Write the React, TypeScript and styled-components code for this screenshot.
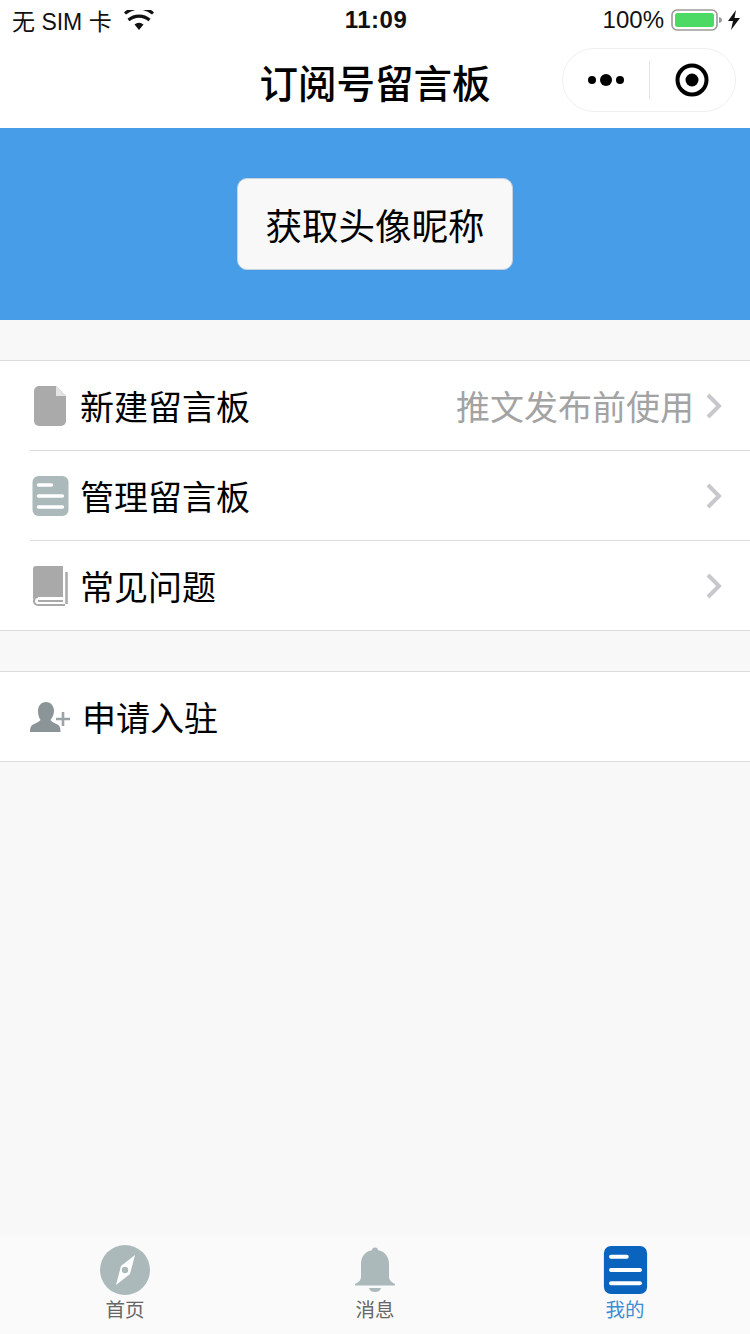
import React from "react";
import styled, { createGlobalStyle } from "styled-components";

const GlobalStyle = createGlobalStyle`
  html, body {
    margin: 0;
    padding: 0;
    background: #f8f8f8;
    font-family: "Liberation Sans", "Noto Sans CJK SC", sans-serif;
  }
  * { box-sizing: border-box; }
`;

const Page = styled.div`
  width: 750px;
  height: 1334px;
  display: flex;
  flex-direction: column;
  background: #f8f8f8;
  overflow: hidden;
`;

const StatusBar = styled.div`
  height: 40px;
  background: #fff;
  display: grid;
  grid-template-columns: 1fr auto 1fr;
  align-items: center;
  padding: 0 10px 0 12px;
  color: #111;
`;
const StatusLeft = styled.div`
  display: flex;
  align-items: center;
  gap: 12px;
  font-size: 23px;
  white-space: nowrap;
`;
const StatusTime = styled.div`
  font-size: 24px;
  font-weight: 700;
  letter-spacing: 0.5px;
`;
const StatusRight = styled.div`
  display: flex;
  align-items: center;
  justify-content: flex-end;
  gap: 7px;
  font-size: 24px;
`;

const NavBar = styled.div`
  height: 88px;
  background: #fff;
  display: flex;
  align-items: center;
  justify-content: center;
  position: relative;
`;
const NavTitle = styled.div`
  font-size: 38.5px;
  font-weight: 500;
  color: #000;
  margin-top: -7px;
`;
const Capsule = styled.div`
  position: absolute;
  right: 14px;
  top: 8px;
  width: 174px;
  height: 64px;
  border: 1px solid #f0f0f0;
  border-radius: 32px;
  display: flex;
  align-items: center;
  background: #fff;
`;
const CapsuleCell = styled.div`
  flex: 1;
  height: 38px;
  display: flex;
  align-items: center;
  justify-content: center;
  & + & {
    border-left: 1px solid #e2e2e2;
  }
`;

const Banner = styled.div`
  height: 192px;
  background: #489de8;
  display: flex;
  align-items: flex-start;
  justify-content: center;
  padding-top: 50px;
`;
const ProfileButton = styled.button`
  width: 276px;
  height: 92px;
  background: #f8f8f8;
  border: 1px solid #c9d3dc;
  border-radius: 10px;
  font-family: inherit;
  font-size: 36.5px;
  color: #000;
  padding: 0;
`;

const Group = styled.div`
  margin-top: 40px;
  background: #fff;
  border-top: 1px solid #dcdcdc;
  border-bottom: 1px solid #dcdcdc;
`;
const Row = styled.div<{ $divided?: boolean }>`
  height: ${(p) => (p.$divided ? 90 : 89)}px;
  display: flex;
  align-items: center;
  padding-right: 28px;
  margin-left: 30px;
  border-bottom: ${(p) => (p.$divided ? "1px solid #dcdcdc" : "none")};
`;
const RowIcon = styled.div`
  width: 40px;
  height: 44px;
  margin-right: 10px;
  display: flex;
  align-items: center;
  justify-content: center;
`;
const RowLabel = styled.div<{ $indent?: number }>`
  flex: 1;
  font-size: 34px;
  color: #000;
  margin-left: ${(p) => p.$indent ?? 0}px;
`;
const RowHint = styled.div`
  font-size: 34px;
  color: #a3a3a3;
  margin-right: 12px;
`;

const TabBar = styled.div`
  margin-top: auto;
  height: 98px;
  background: #fafafa;
  display: grid;
  grid-template-columns: repeat(3, 1fr);
`;
const Tab = styled.div`
  display: flex;
  flex-direction: column;
  align-items: center;
  padding-top: 8px;
`;
const TabIcon = styled.div`
  height: 52px;
  display: flex;
  align-items: center;
  justify-content: center;
`;
const TabLabel = styled.div<{ $active?: boolean }>`
  font-size: 19.5px;
  line-height: 28px;
  margin-top: 0;
  color: ${(p) => (p.$active ? "#3b8ed4" : "#666")};
`;

const Chevron = () => (
  <svg width="16" height="26" viewBox="0 0 16 26">
    <path d="M2 2l11 11L2 24" fill="none" stroke="#c7c7cc" strokeWidth="4" />
  </svg>
);

const DocIcon = () => (
  <svg width="34" height="42" viewBox="0 0 34 42">
    <path d="M6 1h17l10 10v25a5 5 0 0 1-5 5H6a5 5 0 0 1-5-5V6a5 5 0 0 1 5-5z" fill="#aaa" />
    <path d="M23 1l10 10H23z" fill="#e4e4e4" />
  </svg>
);

const ListIcon = ({ color, size, height }: { color: string; size: number; height: number }) => (
  <svg width={size} height={height} viewBox="0 0 36 40">
    <rect width="36" height="40" rx="6" fill={color} />
    <g stroke="#fff" strokeWidth="3.4" strokeLinecap="round">
      <path d="M6 9h13" />
      <path d="M6 20h24" />
      <path d="M6 31h24" />
    </g>
  </svg>
);

const BookIcon = () => (
  <svg width="36" height="42" viewBox="0 0 36 42">
    <path d="M4 1h27v31H7a4.5 4.5 0 0 0-6 3V4a3 3 0 0 1 3-3z" fill="#a9a9a9" />
    <path d="M34.5 7v32" stroke="#a9a9a9" strokeWidth="2.5" />
    <path d="M33 40H6a4 4 0 0 1-4-4 4 4 0 0 1 4-4" fill="none" stroke="#a9a9a9" strokeWidth="2.2" />
    <path d="M6 36h25" stroke="#a9a9a9" strokeWidth="2" />
  </svg>
);

const UserPlusIcon = () => (
  <svg width="40" height="32" viewBox="0 0 40 32">
    <path
      d="M16 1c5 0 8 4 8 9 0 4-2 7-3.500 9 1 2 4 3 7 4.500 2 1 3 3 3 7.500H0c0-4.500 1-6.500 3-7.500 3-1.500 6-2.500 7.500-4.500C9 17 8 14 8 10c0-5 3-9 8-9z"
      fill="#8b9598"
    />
    <path d="M33 11v14M26 18h14" stroke="#9aa3a6" strokeWidth="2.6" />
  </svg>
);

const CompassIcon = () => (
  <svg width="50" height="50" viewBox="0 0 50 50">
    <circle cx="25" cy="25" r="25" fill="#abb9ba" />
    <path d="M35 10L30 29 16 40l5-19z" fill="#fff" />
    <circle cx="25" cy="25" r="3.200" fill="#abb9ba" />
  </svg>
);

const BellIcon = () => (
  <svg width="40" height="46" viewBox="0 0 40 46">
    <circle cx="20" cy="3.500" r="3" fill="#abb9ba" />
    <path
      d="M20 3c-9 0-14 6-14 14v13c0 3-2 5-6 7 0 1 0 1.500 1 1.500h38c1 0 1-.5 1-1.500-4-2-6-4-6-7V17c0-8-5-14-14-14z"
      fill="#abb9ba"
    />
    <path d="M14 41h12c-1 3-3 4-6 4s-5-1-6-4z" fill="#abb9ba" />
  </svg>
);

const App = () => {
  return (
    <Page>
      <GlobalStyle />
      <StatusBar>
        <StatusLeft>
          <span>无 SIM 卡</span>
          <svg width="30" height="20" viewBox="0 0 30 20">
            <path d="M15 20l-4.500-5.500a7 7 0 0 1 9 0z" fill="#111" />
            <path d="M4.500 8.500a16 16 0 0 1 21 0" fill="none" stroke="#111" strokeWidth="3.200" transform="translate(0 1.500)" />
            <path d="M1 4.500a21 21 0 0 1 28 0" fill="none" stroke="#111" strokeWidth="3" transform="translate(0 -1)" />
          </svg>
        </StatusLeft>
        <StatusTime>11:09</StatusTime>
        <StatusRight>
          <span>100%</span>
          <svg width="52" height="24" viewBox="0 0 52 24">
            <rect x="1" y="2" width="45" height="20" rx="5" fill="none" stroke="#9a9a9a" strokeWidth="1.600" />
            <rect x="4" y="5" width="39" height="14" rx="2.500" fill="#4cd964" />
            <path d="M48 9c2 .5 3 1.500 3 3s-1 2.500-3 3z" fill="#9a9a9a" />
          </svg>
          <svg width="12" height="20" viewBox="0 0 12 20" style={{ marginLeft: -2 }}>
            <path d="M8 0L0 11h5l-2 9 9-12H6.500z" fill="#111" />
          </svg>
        </StatusRight>
      </StatusBar>
      <NavBar>
        <NavTitle>订阅号留言板</NavTitle>
        <Capsule>
          <CapsuleCell>
            <svg width="38" height="16" viewBox="0 0 38 16">
              <circle cx="5" cy="8" r="4" fill="#000" />
              <circle cx="19" cy="8" r="6" fill="#000" />
              <circle cx="33" cy="8" r="4" fill="#000" />
            </svg>
          </CapsuleCell>
          <CapsuleCell>
            <svg width="34" height="34" viewBox="0 0 34 34">
              <circle cx="17" cy="17" r="14.500" fill="none" stroke="#000" strokeWidth="4" />
              <circle cx="17" cy="17" r="6.500" fill="#000" />
            </svg>
          </CapsuleCell>
        </Capsule>
      </NavBar>
      <Banner>
        <ProfileButton>获取头像昵称</ProfileButton>
      </Banner>
      <Group>
        <Row $divided>
          <RowIcon>
            <DocIcon />
          </RowIcon>
          <RowLabel>新建留言板</RowLabel>
          <RowHint>推文发布前使用</RowHint>
          <Chevron />
        </Row>
        <Row $divided>
          <RowIcon>
            <ListIcon color="#abb9ba" size={37} height={40} />
          </RowIcon>
          <RowLabel>管理留言板</RowLabel>
          <Chevron />
        </Row>
        <Row>
          <RowIcon>
            <BookIcon />
          </RowIcon>
          <RowLabel>常见问题</RowLabel>
          <Chevron />
        </Row>
      </Group>
      <Group>
        <Row>
          <RowIcon>
            <UserPlusIcon />
          </RowIcon>
          <RowLabel $indent={2}>申请入驻</RowLabel>
        </Row>
      </Group>
      <TabBar>
        <Tab>
          <TabIcon>
            <CompassIcon />
          </TabIcon>
          <TabLabel>首页</TabLabel>
        </Tab>
        <Tab>
          <TabIcon>
            <BellIcon />
          </TabIcon>
          <TabLabel>消息</TabLabel>
        </Tab>
        <Tab>
          <TabIcon>
            <ListIcon color="#0a63bd" size={45} height={48} />
          </TabIcon>
          <TabLabel $active>我的</TabLabel>
        </Tab>
      </TabBar>
    </Page>
  );
};

export default App;
